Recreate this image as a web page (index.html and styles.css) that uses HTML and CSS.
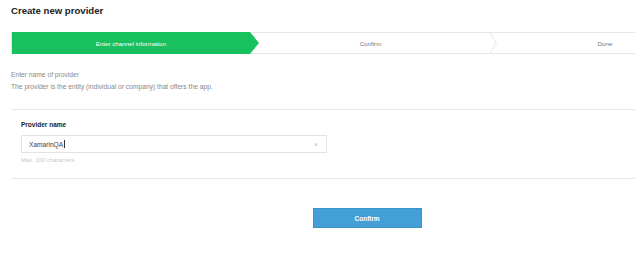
FILE: index.html
```html
<!DOCTYPE HTML>
<html>
	<head>
		<meta name="viewport" content="width=device-width, initial-scale=1">
		<link rel="stylesheet" href="styles.css">
	</head>
	<body>
		<h1 class="page-title">Create new provider</h1>
		<div class="page">
			<div class="stepper">
				<div class="step step-active">Enter channel information</div>
				<div class="step step-middle">
					Confirm
					<svg class="step-chevron" width="9" height="22" viewBox="0 0 9 22">
						<polyline points="0.5,0 7.5,11 0.5,22" fill="none" stroke="#e6e6e6" stroke-width="1"/>
					</svg>
				</div>
				<div class="step step-last">Done</div>
			</div>

			<div class="intro">
				<p>Enter name of provider</p>
				<p>The provider is the entity (individual or company) that offers the app.</p>
			</div>

			<div class="form-section">
				<label class="field-label" for="provider-name">Provider name</label>
				<div class="field-input">
					<span class="field-value">XamarinQA<span class="caret"></span></span>
					<span class="field-clear">&times;</span>
				</div>
				<div class="field-hint">Max. 100 characters</div>
			</div>

			<div class="actions">
				<div class="confirm-button">Confirm</div>
			</div>
		</div>
	</body>
</html>
```

FILE: styles.css
```css
html{
	font-family: 'Liberation Sans', Arial, sans-serif;
	color: #333;
}
body{
	margin: 0;
	padding-left: 11px;
	overflow: hidden;
	background-color: white;
}
.page-title{
	font-size: 9.6px;
	font-weight: 700;
	color: #222;
	margin: 0;
	padding-top: 6px;
	height: 26px;
	line-height: 10px;
}
/* stepper and actions are wider than the window, the rest is clipped */
.page{
	overflow: hidden;
}
.stepper{
	display: flex;
	width: 710px;
	height: 20px;
	border: 1px solid #e6e6e6;
}
.step{
	position: relative;
	display: flex;
	align-items: center;
	justify-content: center;
	font-size: 6.2px;
	color: #777;
}
.step-active{
	width: 238px;
	background-color: #19c05e;
	color: white;
	margin: -1px 0;
}
.step-middle{
	width: 241px;
}
.step-last{
	width: 228px;
}
.step-active::after{
	content: "";
	position: absolute;
	top: 0;
	right: -9px;
	width: 9px;
	height: 100%;
	background-color: #19c05e;
	clip-path: polygon(0 0, 100% 50%, 0 100%);
}
.step-chevron{
	position: absolute;
	top: -1px;
	right: -7px;
}
.intro{
	padding-top: 15px;
	height: 40px;
	border-bottom: 1px solid #e8e8e8;
}
.intro p{
	margin: 0;
	font-size: 6.7px;
	line-height: 12px;
	color: #888;
}
.form-section{
	padding: 10px 10px 0;
	height: 58px;
	border-bottom: 1px solid #e8e8e8;
}
.field-label{
	display: block;
	font-size: 6.5px;
	font-weight: 700;
	color: #222;
	line-height: 10px;
}
.field-input{
	display: flex;
	align-items: center;
	justify-content: space-between;
	width: 289px;
	height: 16px;
	margin-top: 5px;
	padding: 0 8px 0 7px;
	border: 1px solid #e3e3e3;
	font-size: 6.6px;
	color: #444;
}
.caret{
	display: inline-block;
	width: 1px;
	height: 8px;
	margin-left: 1px;
	vertical-align: -1px;
	background-color: #333;
}
.field-clear{
	color: #bbb;
	font-size: 7px;
}
.field-hint{
	margin-top: 4px;
	font-size: 5.9px;
	color: #c8c8c8;
}
.actions{
	display: flex;
	justify-content: center;
	width: 712px;
	padding-top: 29px;
}
.confirm-button{
	display: flex;
	align-items: center;
	justify-content: center;
	width: 107px;
	height: 18px;
	background-color: #449fd7;
	border: 1px solid #3c93c9;
	color: white;
	font-size: 6.5px;
	font-weight: 700;
	cursor: pointer;
}
```
